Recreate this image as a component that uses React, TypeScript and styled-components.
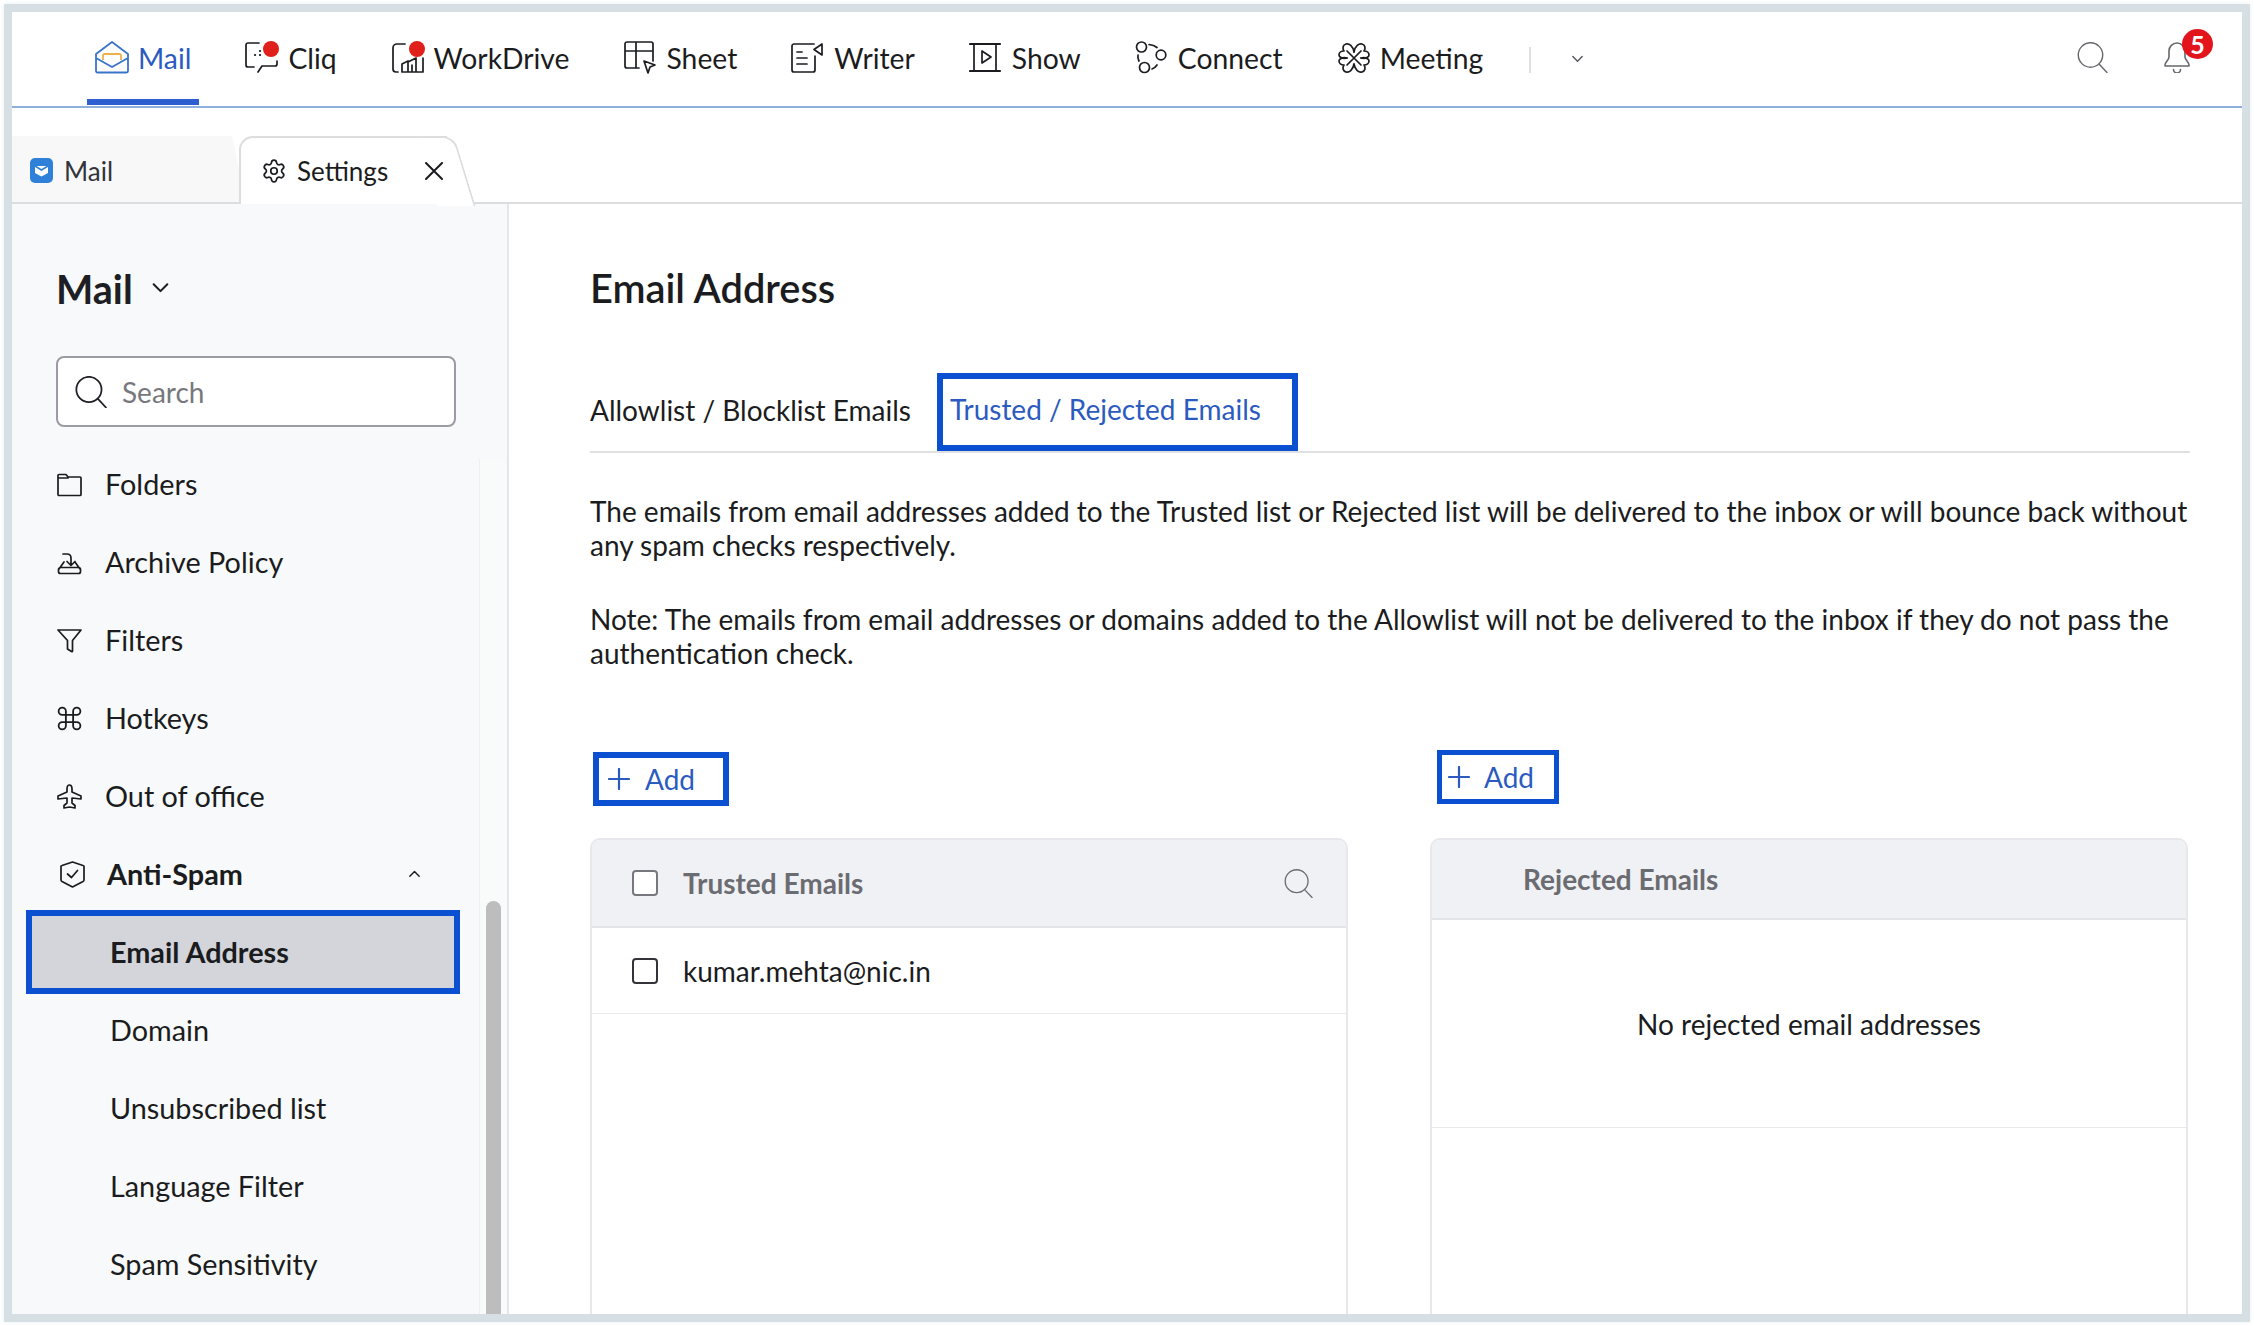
import * as React from 'react';
import styled, { createGlobalStyle } from 'styled-components';
import { Command, Settings } from 'lucide-react';

const GlobalStyle = createGlobalStyle`
  html, body {
    margin: 0;
    height: 100%;
    overflow: hidden;
    background: #fff;
    font-family: Lato, "Open Sans", sans-serif;
    color: #1b1c20;
  }
  * { box-sizing: border-box; }
`;

const Frame = styled.div`
  margin: 4px;
  width: 2246px;
  height: 1318px;
  border: 8px solid #d5dfe4;
  box-shadow: 0 0 4px #e6edf0;
  display: flex;
  flex-direction: column;
  overflow: hidden;
  background: #fff;
`;

/* top product bar */
const TopBar = styled.div`
  flex: 0 0 96px;
  display: flex;
  gap: 38px;
  padding-left: 75px;
  border-bottom: 2px solid #8fb0dd;
`;

const NavItem = styled.div<{ $active?: boolean }>`
  height: 93px;
  padding: 5px 8px 0;
  display: flex;
  align-items: center;
  gap: 9px;
  font-size: 28.3px;
  color: ${p => (p.$active ? '#2c5bc0' : '#1b1c20')};
  border-bottom: 6px solid ${p => (p.$active ? '#2d5fd0' : 'transparent')};
  svg { flex: 0 0 34px; }
`;

const NavDivider = styled.div`
  width: 2px;
  height: 26px;
  margin-top: 35px;
  background: #dfe0e2;
`;

const NavCaret = styled.div`
  margin: 43px 0 0 2px;
  color: #55565c;
  svg { display: block; }
`;

const TopRight = styled.div`
  margin-left: auto;
  padding: 30px 51px 0 0;
  display: flex;
  gap: 55px;
  color: #66676c;
`;

const BellBox = styled.div`
  position: relative;
  width: 28px;
  height: 31px;
`;

const Badge = styled.span`
  position: absolute;
  top: -13px;
  left: 19px;
  width: 31px;
  height: 30px;
  border-radius: 50%;
  background: #e2141c;
  color: #fff;
  font-size: 25px;
  font-weight: 700;
  line-height: 30px;
  text-align: center;
`;

/* open tabs row */
const TabStrip = styled.div`
  flex: 0 0 96px;
  padding-top: 28px;
  display: flex;
  border-bottom: 2px solid #dcdddf;
`;

const MailTab = styled.div`
  position: relative;
  width: 206px;
  height: 66px;
  padding: 3px 0 0 18px;
  display: flex;
  align-items: center;
  gap: 11px;
  font-size: 26px;
  color: #33343a;
  background: #f8f8f9;
  &::after {
    content: '';
    position: absolute;
    top: 0;
    left: calc(100% - 14px);
    width: 28px;
    height: 100%;
    background: #f8f8f9;
    transform: skewX(12deg);
    transform-origin: left top;
  }
  > * { position: relative; z-index: 1; }
`;

const SettingsTab = styled.div`
  position: relative;
  width: 208px;
  height: 68px;
  margin: 0 0 -2px 21px;
  padding-left: 20px;
  display: flex;
  align-items: center;
  font-size: 26px;
  background: #fff;
  border: solid #dcdddf;
  border-width: 2px 0 0 2px;
  border-top-left-radius: 14px;
  span { margin: 0 37px 0 10px; }
  svg { flex: none; }
  &::after {
    content: '';
    position: absolute;
    top: -2px;
    right: -18px;
    width: 36px;
    height: 68px;
    background: #fff;
    border: solid #dcdddf;
    border-width: 2px 2px 0 0;
    border-top-right-radius: 12px;
    transform: skewX(17deg);
    z-index: 0;
  }
  > * { position: relative; z-index: 1; }
`;

const Body = styled.div`
  flex: 1;
  min-height: 0;
  display: flex;
`;

/* settings sidebar */
const Sidebar = styled.aside`
  flex: 0 0 497px;
  display: flex;
  flex-direction: column;
  min-height: 0;
  background: #f8f9fa;
  border-right: 2px solid #e4e6e9;
`;

const SidebarHead = styled.div`
  padding: 54px 0 18px 44px;
`;

const ModuleTitle = styled.div`
  height: 60px;
  display: flex;
  align-items: center;
  gap: 18px;
  font-size: 39.5px;
  font-weight: 700;
  color: #1e1f24;
`;

const SearchBox = styled.div`
  margin-top: 38px;
  width: 400px;
  height: 71px;
  padding-left: 17px;
  display: flex;
  align-items: center;
  gap: 15px;
  font-size: 28px;
  color: #77787e;
  background: #fff;
  border: 2px solid #9b9ca3;
  border-radius: 8px;
  svg { color: #1e1f24; }
`;

const SidebarBody = styled.div`
  flex: 1;
  min-height: 0;
  display: flex;
`;

const SideList = styled.div`
  width: 467px;
`;

const SideRow = styled.div<{ $bold?: boolean }>`
  height: 78px;
  padding: 0 58px 0 45px;
  display: flex;
  align-items: center;
  gap: 23px;
  font-size: 28.8px;
  font-weight: ${p => (p.$bold ? 700 : 400)};
  svg { flex: none; }
  svg.caret { margin-left: auto; }
`;

const SubRow = styled.div<{ $current?: boolean }>`
  display: flex;
  align-items: center;
  font-size: 28.8px;
  height: ${p => (p.$current ? '84px' : '78px')};
  padding-left: ${p => (p.$current ? '78px' : '98px')};
  margin: ${p => (p.$current ? '-3px 19px -3px 14px' : '0')};
  font-weight: ${p => (p.$current ? 700 : 400)};
  background: ${p => (p.$current ? '#d3d5da' : 'transparent')};
  border: ${p => (p.$current ? '6px solid #0a50d0' : 'none')};
`;

const ScrollTrack = styled.div`
  flex: 0 0 27px;
  margin-top: 14px;
  padding: 442px 5px 0 6px;
  border-left: 1px solid #eeeff1;
  background: #f9fafa;
`;

const ScrollThumb = styled.div`
  height: 100%;
  background: #bdbdbd;
  border-radius: 8px 8px 0 0;
`;

/* right hand content */
const Main = styled.main`
  flex: 1;
  min-width: 0;
  padding: 54px 52px 0 81px;
  display: flex;
  flex-direction: column;
`;

const PageTitle = styled.h1`
  margin: 0;
  height: 60px;
  line-height: 60px;
  font-size: 39.8px;
  font-weight: 600;
`;

const TabRow = styled.div`
  margin-top: 55px;
  height: 80px;
  display: flex;
  border-bottom: 2px solid #dfe0e2;
`;

const PlainTab = styled.div`
  height: 78px;
  display: flex;
  align-items: center;
  padding-bottom: 4px;
  font-size: 28px;
  margin-right: 26px;
`;

const ActiveTab = styled(PlainTab)`
  width: 361px;
  margin: 0;
  padding: 0 0 6px 7px;
  color: #2c5bc0;
  border: 6px solid #0a50d0;
`;

const Copy = styled.p`
  margin: 41px 0 0;
  font-size: 28px;
  line-height: 34px;
  & + & { margin-top: 40px; }
`;

const Columns = styled.div`
  flex: 1;
  min-height: 0;
  margin-top: 80px;
  display: grid;
  grid-template-columns: 758px 758px;
  gap: 82px;
`;

const Column = styled.div`
  display: flex;
  flex-direction: column;
`;

const AddSlot = styled.div`
  flex: 0 0 88px;
`;

const AddButton = styled.div<{ $right?: boolean }>`
  width: ${p => (p.$right ? '122px' : '136px')};
  height: 54px;
  margin: ${p => (p.$right ? '0 0 0 7px' : '2px 0 0 3px')};
  padding-left: ${p => (p.$right ? '6px' : '9px')};
  display: flex;
  align-items: center;
  gap: ${p => (p.$right ? '14px' : '15px')};
  font-size: 28px;
  color: #2c5bc0;
  border: ${p => (p.$right ? '5px' : '6px')} solid #0a50d0;
  background: #fff;
`;

const Panel = styled.div`
  flex: 1;
  min-height: 0;
  border: 2px solid #e6e8ec;
  border-bottom: 0;
  border-radius: 10px 10px 0 0;
  overflow: hidden;
`;

const PanelHead = styled.div<{ $short?: boolean }>`
  height: ${p => (p.$short ? '80px' : '88px')};
  padding: ${p => (p.$short ? '0 0 0 91px' : '0 33px 0 40px')};
  display: flex;
  align-items: center;
  gap: 25px;
  font-size: 28px;
  font-weight: 700;
  color: #6b6c72;
  background: #f0f1f4;
  border-bottom: 2px solid #e3e5e9;
  svg { margin-left: auto; }
`;

const Check = styled.span<{ $dark?: boolean }>`
  flex: 0 0 26px;
  height: 26px;
  border: 2px solid ${p => (p.$dark ? '#33343a' : '#77787e')};
  border-radius: 4px;
  background: #fff;
`;

const EmailRow = styled.div`
  height: 86px;
  padding-left: 40px;
  display: flex;
  align-items: center;
  gap: 25px;
  font-size: 28px;
  border-bottom: 1px solid #e8e9eb;
`;

const EmptyNote = styled.div`
  height: 208px;
  display: flex;
  align-items: center;
  justify-content: center;
  font-size: 28px;
  border-bottom: 1px solid #e8e9eb;
`;

const line = { fill: 'none', stroke: 'currentColor', strokeWidth: 1.7, strokeLinecap: 'round', strokeLinejoin: 'round' } as const;
const Dot = () => <circle cx="26" cy="8" r="8" fill="#e0201a" />;

const MailIcon = () => (
  <svg width="34" height="34" viewBox="0 0 34 34">
    <path d="M8 19v-4.500a1.500 1.500 0 0 1 1.500-1.500h15a1.500 1.500 0 0 1 1.500 1.500V19" fill="none" stroke="#eeb04a" strokeWidth="1.800" />
    <path d="M1 13 17 1l16 12v17a1.500 1.500 0 0 1-1.500 1.500h-29A1.500 1.500 0 0 1 1 30zM1 17l16 9 16-9" fill="none" stroke="#3a74c9" strokeWidth="1.800" strokeLinejoin="round" />
  </svg>
);
const CliqIcon = () => (
  <svg width="34" height="34" viewBox="0 0 34 34">
    <path {...line} d="M14 2H3a2 2 0 0 0-2 2v20a2 2 0 0 0 2 2h6M32 20v3a2 2 0 0 1-2 2H17l-4 6" />
    <path {...line} strokeWidth="2.200" d="M10 14h.1M15 14h.1M15 10h.1" />
    <Dot />
  </svg>
);
const DriveIcon = () => (
  <svg width="34" height="34" viewBox="0 0 34 34">
    <path {...line} d="M14 3H6a4 4 0 0 0-4 4v21a3 3 0 0 0 3 3h2M32 17v14H11v-8l6-3v11M17 21l8-4v14M21 31V24" />
    <Dot />
  </svg>
);
const SheetIcon = () => (
  <svg width="34" height="34" viewBox="0 0 34 34">
    <path {...line} d="M15 27H3a2 2 0 0 1-2-2V3a2 2 0 0 1 2-2h24a2 2 0 0 1 2 2v17M1 10h28M12 1v26" />
    <path {...line} d="m20 20 11 4-5 2-2 6z" />
  </svg>
);
const WriterIcon = () => (
  <svg width="34" height="34" viewBox="0 0 34 34">
    <path {...line} d="M23 3H3a2 2 0 0 0-2 2v24a2 2 0 0 0 2 2h19a2 2 0 0 0 2-2V15M31 3v11l-8-5.500zM6 11h5M6 17h10M6 23h10" />
  </svg>
);
const ShowIcon = () => (
  <svg width="34" height="34" viewBox="0 0 34 34">
    <path {...line} strokeWidth="2.200" d="M1 3h30M1 30h30" />
    <path {...line} d="M5 3v27M27 3v27M13 10v12l9-6z" />
  </svg>
);
const ConnectIcon = () => (
  <svg width="34" height="34" viewBox="0 0 34 34">
    <circle {...line} cx="6.500" cy="6" r="5" />
    <circle {...line} cx="26" cy="14" r="4.800" />
    <circle {...line} cx="9.500" cy="26.500" r="5" />
    <path {...line} d="M14 3.500q5 .5 8 3M3 14q-.5 3 1 6M17 28q3-1 5-4" />
  </svg>
);
const meetingLobe = 'M17 11C16 5 12 2 9 3 6 4 5 7 7 10 4 10 2 12 2 14 2 16 5 18 10 17';
const MeetingIcon = () => (
  <svg width="34" height="34" viewBox="0 0 34 34">
    <path {...line} d={meetingLobe} />
    <path {...line} d={meetingLobe} transform="matrix(-1 0 0 1 34 0)" />
    <path {...line} d={meetingLobe} transform="matrix(1 0 0 -1 0 34)" />
    <path {...line} d={meetingLobe} transform="matrix(-1 0 0 -1 34 34)" />
    <path {...line} d="M10 10l14 14M24 10 10 24" />
  </svg>
);

const Magnifier = ({ size = 31, weight = 1.4 }: { size?: number; weight?: number }) => (
  <svg width={size} height={size} viewBox="0 0 31 31" fill="none" stroke="currentColor" strokeWidth={weight} strokeLinecap="round">
    <circle cx="13.500" cy="13" r="12.200" />
    <path d="m22 22 8 8.500" />
  </svg>
);

const Bell = () => (
  <svg width="28" height="31" viewBox="0 0 28 31" fill="none" stroke="currentColor" strokeWidth="1.600" strokeLinecap="round" strokeLinejoin="round">
    <path d="M14 1a8 8 0 0 0-8 8v6c0 3-4 5-4 8v1h24v-1c0-3-4-5-4-8V9a8 8 0 0 0-8-8zM10.500 27.500a3.500 3.500 0 0 0 7 0" />
  </svg>
);

const Chevron = ({ up, size = 16 }: { up?: boolean; size?: number }) => (
  <svg className={up ? 'caret' : undefined} width={size} height={size * 0.6} viewBox="0 0 16 10" fill="none" stroke="currentColor" strokeWidth="1.800" strokeLinecap="round" strokeLinejoin="round">
    <path d={up ? 'M2 8l6-6 6 6' : 'M2 2l6 6 6-6'} />
  </svg>
);

const CrossMark = () => (
  <svg width="18" height="18" viewBox="0 0 18 18" fill="none" stroke="currentColor" strokeWidth="2" strokeLinecap="round">
    <path d="M1 1l16 16M17 1 1 17" />
  </svg>
);

const PlusMark = () => (
  <svg width="22" height="22" viewBox="0 0 22 22" fill="none" stroke="currentColor" strokeWidth="2.200" strokeLinecap="round">
    <path d="M11 1v20M1 11h20" />
  </svg>
);

const side = { width: 25, height: 25, viewBox: '0 0 25 25', ...line } as const;
const FolderIcon = () => (
  <svg {...side}><path d="M1 3.500a1 1 0 0 1 1-1h7l2 2.500h12a1 1 0 0 1 1 1V22.500a1 1 0 0 1-1 1H2a1 1 0 0 1-1-1zM1 6h10" /></svg>
);
const ArchiveIcon = () => (
  <svg {...side}><path d="M6 4h4q4 0 4 4v7M10 11.500l4 4 4-4M7 12 2 19M18 12l5 7M3.500 17.500h18a2 2 0 0 1 2 2v2a2 2 0 0 1-2 2h-18a2 2 0 0 1-2-2v-2a2 2 0 0 1 2-2z" /></svg>
);
const FunnelIcon = () => (
  <svg {...side}><path d="M1 2h23l-8.500 10.500V23q0 1-1 .5l-4-2.500V12.500z" /></svg>
);
const PlaneIcon = () => (
  <svg {...side}><path d="M12.500 1c-1.800 0-2.500 2-2.500 4v3L1 12v3l9-1v5l-3 2.500V24l5.500-1 5.500 1v-2.500L15 19v-5l9 1v-3l-9-4V5c0-2-.7-4-2.500-4z" /></svg>
);
const ShieldIcon = () => (
  <svg {...side} width="25" height="27" viewBox="0 0 25 27" style={{ margin: '0 -1px 0 3px' }}><path d="M12.500 1 23 4.500a1 1 0 0 1 1 1V19a2 2 0 0 1-1 1.500L12.500 26 2 20.500A2 2 0 0 1 1 19V5.500a1 1 0 0 1 1-1zM7.500 13l4 3.500 6-7" /></svg>
);

const HotkeyIcon = () => <Command size={29} strokeWidth={1.5} style={{ margin: '0 -2px' }} />;

const apps = [
  { name: 'Mail', icon: <MailIcon />, active: true },
  { name: 'Cliq', icon: <CliqIcon /> },
  { name: 'WorkDrive', icon: <DriveIcon /> },
  { name: 'Sheet', icon: <SheetIcon /> },
  { name: 'Writer', icon: <WriterIcon /> },
  { name: 'Show', icon: <ShowIcon /> },
  { name: 'Connect', icon: <ConnectIcon /> },
  { name: 'Meeting', icon: <MeetingIcon /> },
];

const sideItems = [
  { name: 'Folders', icon: <FolderIcon /> },
  { name: 'Archive Policy', icon: <ArchiveIcon /> },
  { name: 'Filters', icon: <FunnelIcon /> },
  { name: 'Hotkeys', icon: <HotkeyIcon /> },
  { name: 'Out of office', icon: <PlaneIcon /> },
];

const subItems = ['Email Address', 'Domain', 'Unsubscribed list', 'Language Filter', 'Spam Sensitivity'];

export default function App() {
  return (
    <>
      <GlobalStyle />
      <Frame>
        <TopBar>
          {apps.map(app => (
            <NavItem key={app.name} $active={app.active}>
              {app.icon}
              {app.name}
            </NavItem>
          ))}
          <NavDivider />
          <NavCaret><Chevron size={13} /></NavCaret>
          <TopRight>
            <Magnifier />
            <BellBox>
              <Bell />
              <Badge>5</Badge>
            </BellBox>
          </TopRight>
        </TopBar>

        <TabStrip>
          <MailTab>
            <svg width="23" height="25" viewBox="0 0 23 25">
              <rect width="23" height="25" rx="5" fill="#2f80d8" />
              <path d="M5 8h13v7l-6.500 3.500L5 15z" fill="#fff" />
              <path d="M5 8l6.500 4L18 8" fill="none" stroke="#2f80d8" strokeWidth="1.500" />
            </svg>
            <span>Mail</span>
          </MailTab>
          <SettingsTab>
            <Settings size={26} strokeWidth={1.6} />
            <span>Settings</span>
            <CrossMark />
          </SettingsTab>
        </TabStrip>

        <Body>
          <Sidebar>
            <SidebarHead>
              <ModuleTitle>Mail <Chevron size={19} /></ModuleTitle>
              <SearchBox>
                <Magnifier size={32} weight={1.7} />
                Search
              </SearchBox>
            </SidebarHead>
            <SidebarBody>
              <SideList>
                {sideItems.map(item => (
                  <SideRow key={item.name}>
                    {item.icon}
                    {item.name}
                  </SideRow>
                ))}
                <SideRow $bold>
                  <ShieldIcon />
                  Anti-Spam
                  <Chevron up size={13} />
                </SideRow>
                {subItems.map((name, i) => (
                  <SubRow key={name} $current={i === 0}>{name}</SubRow>
                ))}
              </SideList>
              <ScrollTrack><ScrollThumb /></ScrollTrack>
            </SidebarBody>
          </Sidebar>

          <Main>
            <PageTitle>Email Address</PageTitle>
            <TabRow>
              <PlainTab>Allowlist / Blocklist Emails</PlainTab>
              <ActiveTab>Trusted / Rejected Emails</ActiveTab>
            </TabRow>
            <Copy>
              The emails from email addresses added to the Trusted list or Rejected list will be delivered to the inbox or will bounce back without any spam checks respectively.
            </Copy>
            <Copy>
              Note: The emails from email addresses or domains added to the Allowlist will not be delivered to the inbox if they do not pass the authentication check.
            </Copy>
            <Columns>
              <Column>
                <AddSlot>
                  <AddButton><PlusMark />Add</AddButton>
                </AddSlot>
                <Panel>
                  <PanelHead>
                    <Check />
                    Trusted Emails
                    <Magnifier size={29} />
                  </PanelHead>
                  <EmailRow>
                    <Check $dark />
                    kumar.mehta@nic.in
                  </EmailRow>
                </Panel>
              </Column>
              <Column>
                <AddSlot>
                  <AddButton $right><PlusMark />Add</AddButton>
                </AddSlot>
                <Panel>
                  <PanelHead $short>Rejected Emails</PanelHead>
                  <EmptyNote>No rejected email addresses</EmptyNote>
                </Panel>
              </Column>
            </Columns>
          </Main>
        </Body>
      </Frame>
    </>
  );
}
